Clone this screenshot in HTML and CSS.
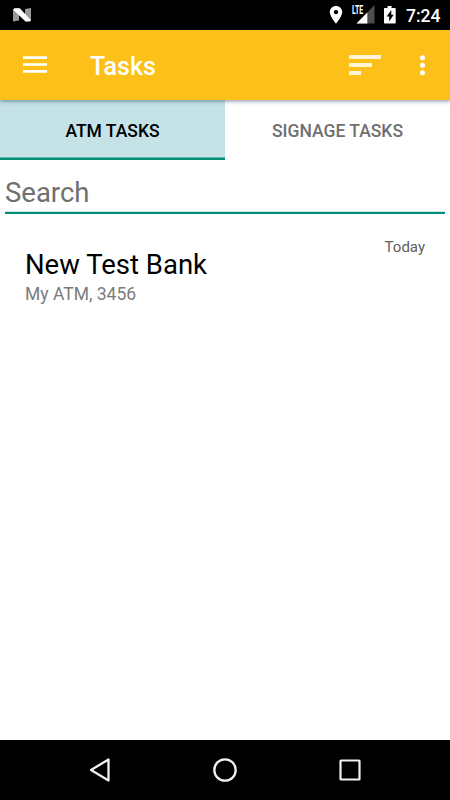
FILE: index.html
```html
<!DOCTYPE html>
<html lang="en">
<head>
<meta charset="utf-8">
<title>Tasks</title>
<link rel="stylesheet" href="styles.css">
</head>
<body>
<div class="status">
  <svg class="n-logo" width="20" height="16" viewBox="0 0 20 16"><path fill="#9a9a9a" d="M1 2l6-.8v12.300l-6 1zM13 2l6-1v12.500l-6 1z"/><path fill="#fff" d="M2.200 1.200h5.600L19 13.200l-1 1.300h-4.500L1.500 3z"/></svg>
  <svg class="pin" width="14" height="20" viewBox="0 0 14 20"><path fill="#fff" fill-rule="evenodd" d="M7 1C3.500 1 .8 3.700.8 7.100.8 11.600 7 18.700 7 18.700s6.200-7.100 6.200-11.600C13.200 3.700 10.500 1 7 1zm0 3.900a2.200 2.200 0 1 1 0 4.400 2.200 2.200 0 0 1 0-4.400z"/></svg>
  <div class="cell">
    <svg width="24" height="20" viewBox="0 0 24 20"><path fill="#4d4d4d" d="M4.500 18.500L22.500 0v18.500z"/><path fill="#fff" d="M4.500 18.500L15.300 7.400v11.100z"/><path d="M0 0h13v9.500H0z"/></svg>
    <span class="lte">LTE</span>
  </div>
  <svg class="battery" width="14" height="20" viewBox="0 0 14 20"><path fill="#fff" fill-rule="evenodd" d="M4.500 1h4v2H12q.7 0 .7.700v14q0 .8-.7.800H1.700q-.7 0-.7-.800V3.700Q1 3 1.700 3h2.800zM8.300 5L3.600 11.500h2.600v5l4.400-6.700H8.300z"/></svg>
  <span class="time">7:24</span>
</div>
<header class="bar">
  <svg class="menu" width="24" height="18" viewBox="0 0 24 18"><path fill="#fff" d="M0 .3h24v2.600H0zM0 7.200h24v2.600H0zM0 14.100h24v2.600H0z"/></svg>
  <h1>Tasks</h1>
  <svg class="sort" width="32" height="21" viewBox="0 0 32 21"><path fill="#fff" fill-opacity=".82" d="M0 0h32v4H0zM0 8h23v4H0zM0 16h12v4H0z"/></svg>
  <svg class="more" width="6" height="21" viewBox="0 0 6 21"><g fill="#fff"><circle cx="2.500" cy="2.700" r="2.500"/><circle cx="2.500" cy="10.200" r="2.500"/><circle cx="2.500" cy="17.700" r="2.500"/></g></svg>
</header>
<nav class="tabs">
  <div class="tab active">ATM TASKS</div>
  <div class="tab">SIGNAGE TASKS</div>
</nav>
<main>
  <div class="search">Search</div>
  <article class="task">
    <div class="info">
      <h2>New Test Bank</h2>
      <p>My ATM, 3456</p>
    </div>
    <time>Today</time>
  </article>
</main>
<footer class="navbar">
  <svg width="26" height="28" viewBox="0 0 26 28"><path fill="none" stroke="#f0f0f0" stroke-width="2.300" stroke-linejoin="round" d="M21.500 3.500v21L4 14z"/></svg>
  <svg width="26" height="28" viewBox="0 0 26 28"><circle cx="13" cy="14" r="10.700" fill="none" stroke="#f0f0f0" stroke-width="2.300"/></svg>
  <svg width="26" height="28" viewBox="0 0 26 28"><rect x="3.500" y="4.500" width="19" height="19" rx=".5" fill="none" stroke="#f0f0f0" stroke-width="2.200"/></svg>
</footer>
</body>
</html>
```
FILE: styles.css
```css
* { box-sizing: border-box; margin: 0; padding: 0; }
body {
  width: 450px;
  height: 800px;
  display: flex;
  flex-direction: column;
  background: #fff;
  font-family: Roboto, "Liberation Sans", sans-serif;
  overflow: hidden;
}
svg { display: block; flex: none; }
.status {
  height: 30px;
  background: #000;
  color: #fff;
  display: flex;
  padding: 5px 10px 0 12px;
}
.n-logo { margin-top: 2px; }
.pin { margin-left: auto; }
.cell { position: relative; margin-left: 9px; }
.lte {
  position: absolute;
  left: 0;
  top: 0;
  font-size: 12px;
  line-height: 11px;
  font-weight: 700;
  transform: scaleX(.58);
  transform-origin: left;
}
.battery { margin-left: 7px; }
.time {
  margin-left: 9px;
  width: 34px;
  font-size: 17.5px;
  line-height: 22px;
  font-weight: 500;
  white-space: nowrap;
}
.bar {
  height: 70px;
  flex: none;
  background: #fcc019;
  color: #fff;
  display: flex;
  align-items: center;
  padding: 0 24px 0 23px;
  box-shadow: 0 1px 4px rgba(20, 40, 90, .55);
  position: relative;
}
.bar h1 {
  margin-left: 43px;
  font-size: 25px;
  line-height: 30px;
  font-weight: 500;
  padding-top: 3px;
}
.sort { margin-left: auto; }
.more { margin-left: 39px; }
.tabs { height: 60px; flex: none; display: flex; }
.tab {
  flex: 1;
  text-align: center;
  font-size: 17.5px;
  line-height: 63px;
  font-weight: 500;
  color: #707070;
}
.tab.active {
  height: 60px;
  background: #c5e2e6;
  color: #000;
  box-shadow: inset 0 -2.500px #009079;
}
main { flex: 1; padding: 0 5px; }
.search {
  height: 54px;
  padding-top: 17px;
  font-size: 27.5px;
  line-height: 32px;
  color: #707070;
  border-bottom: 2px solid #008d77;
  box-shadow: inset 0 -1px #c9e7e3;
}
.task {
  display: flex;
  justify-content: space-between;
  padding: 24px 20px 0;
}
.task h2 {
  font-size: 27.5px;
  line-height: 32px;
  font-weight: 400;
  color: #000;
  margin-top: 11px;
}
.task p { font-size: 17.5px; line-height: 21px; color: #7b7b7b; margin-top: 3px; }
.task time { font-size: 15px; line-height: 18px; color: #606060; }
.navbar {
  height: 60px;
  background: #000;
  display: flex;
  justify-content: space-between;
  align-items: center;
  padding: 0 87px;
}
```
